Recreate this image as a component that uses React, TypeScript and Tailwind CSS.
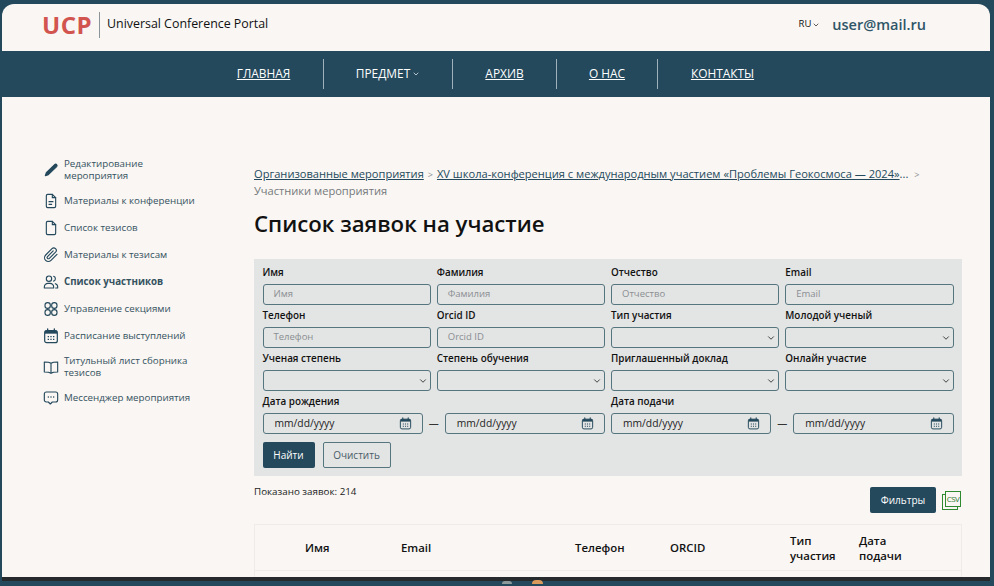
import { ChevronDown } from "lucide-react";
import type { ReactNode } from "react";

const NAV = [
  { label: "ГЛАВНАЯ", w: "w-[120px]" },
  { label: "ПРЕДМЕТ", w: "w-[129px]", menu: true },
  { label: "АРХИВ", w: "w-[104px]" },
  { label: "О НАС", w: "w-[101px]" },
  { label: "КОНТАКТЫ", w: "w-[129px]" },
];

function Icon({ children }: { children: ReactNode }) {
  return (
    <svg viewBox="0 0 24 24" className="w-[16px] h-[16px] shrink-0" fill="none" stroke="#24495c" strokeWidth="1.7" strokeLinecap="round" strokeLinejoin="round">
      {children}
    </svg>
  );
}

function CalendarGlyph({ size = "w-[16px] h-[16px]" }: { size?: string }) {
  return (
    <svg viewBox="0 0 24 24" className={`${size} shrink-0`} fill="none">
      <rect x="2.500" y="4" width="19" height="18" rx="3" stroke="#24495c" strokeWidth="1.800" />
      <path d="M3 4h18v4.500H3z" fill="#24495c" />
      <path d="M7 1.500v4M17 1.500v4" stroke="#24495c" strokeWidth="2" strokeLinecap="round" />
      <path d="M7 13h2M11 13h2M15 13h2M7 17h2M11 17h2M15 17h2" stroke="#24495c" strokeWidth="1.900" />
    </svg>
  );
}

const MENU: { label: string; icon: ReactNode; active?: boolean }[] = [
  {
    label: "Редактирование мероприятия",
    icon: (
      <Icon>
        <path d="M3.500 20.500l1.500-4.500L17.500 3.800c.9-.9 2.200-.9 3 0s.8 2.100 0 3L8 19z" fill="#24495c" />
      </Icon>
    ),
  },
  {
    label: "Материалы к конференции",
    icon: (
      <Icon>
        <path d="M14 2H7a2 2 0 0 0-2 2v16a2 2 0 0 0 2 2h10a2 2 0 0 0 2-2V7z" />
        <path d="M14 2v5h5M9 13h6M9 17h4" />
      </Icon>
    ),
  },
  {
    label: "Список тезисов",
    icon: (
      <Icon>
        <path d="M14 2H7a2 2 0 0 0-2 2v16a2 2 0 0 0 2 2h10a2 2 0 0 0 2-2V7z" />
        <path d="M14 2v5h5" />
      </Icon>
    ),
  },
  {
    label: "Материалы к тезисам",
    icon: (
      <Icon>
        <path d="M21 11l-9 9a5.500 5.500 0 0 1-8-8l9.500-9.500a3.700 3.700 0 0 1 5.300 5.300l-9.300 9.300a1.900 1.900 0 0 1-2.700-2.700l8.500-8.500" />
      </Icon>
    ),
  },
  {
    label: "Список участников",
    active: true,
    icon: (
      <Icon>
        <circle cx="9" cy="7" r="4" />
        <path d="M2 21v-1.500A5.500 5.500 0 0 1 7.500 14h3a5.500 5.500 0 0 1 5.500 5.500V21zM16 3.500a3.800 3.800 0 0 1 0 7.200M18.500 14.500a5 5 0 0 1 3.500 4.800V21h-3" />
      </Icon>
    ),
  },
  {
    label: "Управление секциями",
    icon: (
      <Icon>
        <rect x="3" y="2.500" width="8" height="8.500" rx="4" />
        <rect x="13" y="2.500" width="8" height="8.500" rx="4" />
        <rect x="3" y="13" width="8" height="8.500" rx="4" />
        <rect x="13" y="13" width="8" height="8.500" rx="4" />
      </Icon>
    ),
  },
  {
    label: "Расписание выступлений",
    icon: <CalendarGlyph />,
  },
  {
    label: "Титульный лист сборника тезисов",
    icon: (
      <Icon>
        <path d="M12 6.500C10 5 7 4.500 2 4.500v15c5 0 8 .5 10 2 2-1.500 5-2 10-2v-15c-5 0-8 .5-10 2zM12 6.500v15" />
      </Icon>
    ),
  },
  {
    label: "Мессенджер мероприятия",
    icon: (
      <Icon>
        <path d="M5 3h14a3 3 0 0 1 3 3v9a3 3 0 0 1-3 3h-5l-3 3-3-3H5a3 3 0 0 1-3-3V6a3 3 0 0 1 3-3z" />
        <path d="M8 10.500h.01M12 10.500h.01M16 10.500h.01" strokeWidth="2.200" />
      </Icon>
    ),
  },
];

function Label({ children }: { children: ReactNode }) {
  return <div className="text-[9.900px] leading-[14px] font-[550] text-[#111] mb-[5px]">{children}</div>;
}

const box = "h-[21px] w-full rounded-[3px] border border-[#55757f] bg-[#e3e4e4]";

function TextField({ label }: { label: string }) {
  return (
    <div>
      <Label>{label}</Label>
      <div className={`${box} flex items-center pl-[10px] text-[9.500px] text-[#8a8f92]`}>{label}</div>
    </div>
  );
}

function SelectField({ label }: { label: string }) {
  return (
    <div>
      <Label>{label}</Label>
      <div className={`${box} flex items-center justify-end pr-[2px]`}>
        <ChevronDown size={10} strokeWidth={2} color="#222" />
      </div>
    </div>
  );
}

function DateInput() {
  return (
    <div className={`${box} flex-1 flex items-center justify-between pl-[11px] pr-[10px] text-[10.300px] text-[#222]`}>
      <span>mm/dd/yyyy</span>
      <CalendarGlyph size="w-[13px] h-[13px]" />
    </div>
  );
}

function DateRange({ label }: { label: string }) {
  return (
    <div>
      <Label>{label}</Label>
      <div className="flex items-center gap-[6px]">
        <DateInput />
        <span className="text-[10px] text-[#333]">—</span>
        <DateInput />
      </div>
    </div>
  );
}

export default function App() {
  return (
    <div
      className="relative h-[586px] w-[994px] overflow-hidden bg-[#24495c] pt-[4px] pl-[2px]"
      style={{ fontFamily: '"Open Sans", "Noto Sans", sans-serif' }}
    >
      <div className="w-[988px] h-[573px] overflow-hidden rounded-t-[12px] bg-[#f9f6f3] border-b-[4px] border-[#262a2c] box-content">
        <header className="h-[47px] flex items-center justify-between pl-[40px] pr-[64px] pb-[6px]">
          <div className="flex items-center">
            <span className="text-[24px] font-bold tracking-[0.5px] text-[#d2544f] leading-none">UCP</span>
            <span className="ml-[7px] mr-[7px] h-[26px] w-px bg-[#8a9499]" />
            <span className="text-[12.400px] text-[#111]">Universal Conference Portal</span>
          </div>
          <div className="flex items-center">
            <span className="text-[9.500px] text-[#111]">RU</span>
            <ChevronDown size={8} className="ml-[1px] mr-[12px]" color="#111" />
            <span className="text-[14.500px] font-semibold text-[#2f5568]">user@mail.ru</span>
          </div>
        </header>

        <nav className="h-[46px] bg-[#24495c] flex items-center pl-[202px]">
          {NAV.map((n, i) => (
            <div key={n.label} className={`${n.w} h-[30px] flex items-center justify-center text-[11.900px] text-white ${i < NAV.length - 1 ? "border-r border-[#9fb2bc]" : ""}`}>
              <span className={n.menu ? "" : "underline"}>{n.label}</span>
              {n.menu && <ChevronDown size={8} className="ml-[2px]" />}
            </div>
          ))}
        </nav>

        <div className="flex pt-[61px]">
          <aside className="w-[252px] pl-[41px] shrink-0">
            <ul className="flex flex-col gap-[11px]">
              {MENU.map((m) => (
                <li key={m.label} className="flex items-center gap-[5px] min-h-[16px]">
                  {m.icon}
                  <span className={`max-w-[140px] text-[9.750px] leading-[12px] text-[#35525f] ${m.active ? "font-bold text-[#24495c]" : ""}`}>{m.label}</span>
                </li>
              ))}
            </ul>
          </aside>

          <main className="w-[708px] pt-[8px]">
            <div className="text-[11.100px] leading-[16px] text-[#24495c] w-[700px] whitespace-nowrap">
              <a className="underline">Организованные мероприятия</a>
              <span className="text-[#8a8f92] text-[9px] mx-[4px]">&gt;</span>
              <a className="underline">XV школа-конференция с международным участием «Проблемы Геокосмоса — 2024»</a>
              <span>...</span>
              <span className="text-[#8a8f92] text-[9px] ml-[6px]">&gt;</span>
              <div className="text-[#75797b]">Участники мероприятия</div>
            </div>
            <h1 className="mt-[10px] text-[22.200px] leading-[30px] font-semibold text-[#111]">Список заявок на участие</h1>

            <section className="mt-[20px] bg-[#e3e4e4] pl-[8.500px] pr-[8.500px] pt-[6px] pb-[8px]">
              <div className="grid grid-cols-4 gap-x-[6px] gap-y-[3px]">
                <TextField label="Имя" />
                <TextField label="Фамилия" />
                <TextField label="Отчество" />
                <TextField label="Email" />
                <TextField label="Телефон" />
                <TextField label="Orcid ID" />
                <SelectField label="Тип участия" />
                <SelectField label="Молодой ученый" />
                <SelectField label="Ученая степень" />
                <SelectField label="Степень обучения" />
                <SelectField label="Приглашенный доклад" />
                <SelectField label="Онлайн участие" />
              </div>
              <div className="grid grid-cols-2 gap-x-[6px] mt-[3px]">
                <DateRange label="Дата рождения" />
                <DateRange label="Дата подачи" />
              </div>
              <div className="flex gap-[8px] mt-[8px]">
                <button className="h-[26px] w-[52px] rounded-[2px] bg-[#24495c] text-[10px] text-white">Найти</button>
                <button className="h-[26px] w-[68px] rounded-[2px] border border-[#55757f] text-[10px] text-[#4a5c66]">Очистить</button>
              </div>
            </section>

            <div className="flex justify-between items-start pt-[4px] pr-[1px]">
              <span className="mt-[2px] text-[9.800px] leading-[20px] text-[#222]">Показано заявок: 214</span>
              <div className="flex items-center gap-[6px] mt-[7px]">
                <button className="h-[26px] w-[66px] rounded-[2px] bg-[#24495c] text-[10px] text-white">Фильтры</button>
                <div className="relative h-[19px] w-[19px]">
                  <div className="absolute left-0 bottom-0 h-[16px] w-[16px] border border-[#2f8a2f]" />
                  <div className="absolute right-0 top-0 h-[16px] w-[16px] border border-[#2f8a2f] bg-[#f9f6f3] text-[8px] tracking-[-0.6px] leading-[14px] text-center text-[#2f7a2f]">CSV</div>
                </div>
              </div>
            </div>

            <div className="mt-[11px] border border-[#eeebe8] h-[60px]">
              <div className="h-[46px] border-b border-[#eeebe8] flex items-center text-[11.400px] leading-[15px] font-semibold text-[#111]">
                <span className="ml-[50px] w-[96px]">Имя</span>
                <span className="w-[174px]">Email</span>
                <span className="w-[95px]">Телефон</span>
                <span className="w-[120px]">ORCID</span>
                <span className="w-[69px]">Тип<br />участия</span>
                <span>Дата<br />подачи</span>
              </div>
            </div>
          </main>
        </div>
      </div>
      {/* края иконок дока снизу */}
      <span className="absolute left-[502px] top-[581px] h-[3px] w-[10px] rounded-t-full bg-[#8d9a9c]" />
      <span className="absolute left-[532px] top-[580px] h-[4px] w-[11px] rounded-t-full bg-[#d99a5b]" />
    </div>
  );
}
